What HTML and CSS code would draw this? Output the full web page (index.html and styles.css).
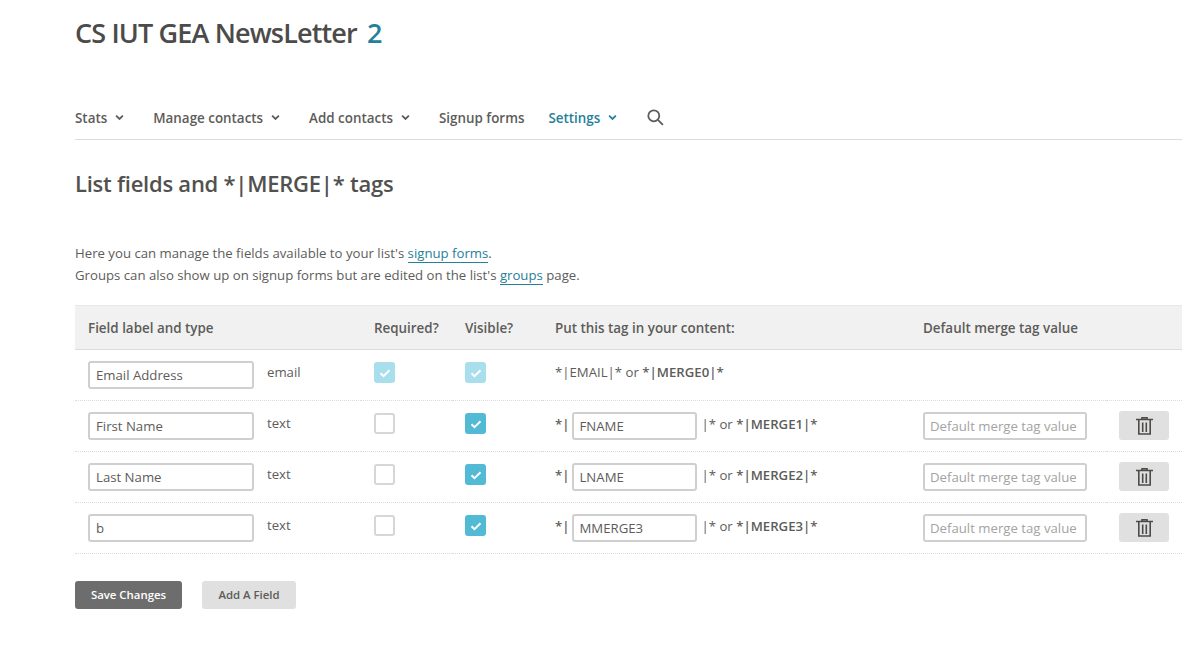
FILE: index.html
```html
<!DOCTYPE html>
<html>
    <head>
        <meta charset="utf-8">
        <meta name="viewport" content="width=device-width, initial-scale=1">
        <title>List fields and merge tags</title>
        <link rel="stylesheet" href="styles.css">
    </head>
    <body>
        <div class="page">
            <h1 class="list-name">CS IUT GEA NewsLetter <span class="list-count">2</span></h1>

            <nav class="nav">
                <a class="nav-item" href="#">Stats <svg class="caret" viewBox="0 0 8 6"><path d="M1 1.3l3 3 3-3"/></svg></a>
                <a class="nav-item" href="#">Manage contacts <svg class="caret" viewBox="0 0 8 6"><path d="M1 1.3l3 3 3-3"/></svg></a>
                <a class="nav-item" href="#">Add contacts <svg class="caret" viewBox="0 0 8 6"><path d="M1 1.3l3 3 3-3"/></svg></a>
                <a class="nav-item" href="#">Signup forms</a>
                <a class="nav-item nav-active" href="#">Settings <svg class="caret" viewBox="0 0 8 6"><path d="M1 1.3l3 3 3-3"/></svg></a>
                <a class="nav-search" href="#"><svg viewBox="0 0 17 17" width="17" height="17"><circle cx="6.8" cy="6.800" r="5.500"/><path d="M10.900 10.900l5 5"/></svg></a>
            </nav>

            <h2 class="title">List fields and *|MERGE|* tags</h2>

            <p class="intro">
                Here you can manage the fields available to your list's <a href="#">signup forms</a>.<br>
                Groups can also show up on signup forms but are edited on the list's <a href="#">groups</a> page.
            </p>

            <table class="fields">
                <thead>
                    <tr>
                        <th class="col-label">Field label and type</th>
                        <th class="col-check">Required?</th>
                        <th class="col-check2">Visible?</th>
                        <th class="col-tag">Put this tag in your content:</th>
                        <th class="col-default">Default merge tag value</th>
                        <th class="col-action"></th>
                    </tr>
                </thead>
                <tbody>
                    <tr>
                        <td><div class="label-cell"><input class="input input-label" type="text" value="Email Address"><span class="field-type">email</span></div></td>
                        <td><span class="check check-locked"><svg viewBox="0 0 12 10"><path d="M1.5 5.2l3 3 6-6"/></svg></span></td>
                        <td><span class="check check-locked"><svg viewBox="0 0 12 10"><path d="M1.5 5.2l3 3 6-6"/></svg></span></td>
                        <td><span class="tag-text">*|EMAIL|* or <b>*|MERGE0|*</b></span></td>
                        <td></td>
                        <td></td>
                    </tr>
                    <tr>
                        <td><div class="label-cell"><input class="input input-label" type="text" value="First Name"><span class="field-type">text</span></div></td>
                        <td><span class="check"></span></td>
                        <td><span class="check check-on"><svg viewBox="0 0 12 10"><path d="M1.5 5.2l3 3 6-6"/></svg></span></td>
                        <td><div class="tag-cell"><b>*|</b><input class="input input-tag" type="text" value="FNAME"><span class="tag-text">|* or <b>*|MERGE1|*</b></span></div></td>
                        <td><input class="input input-default" type="text" placeholder="Default merge tag value"></td>
                        <td><button class="trash"><svg viewBox="0 0 17 18" width="17" height="18"><path d="M0 2.5h17M6 2.500V.8h5v1.700"/><path d="M2.800 3v14h11.400V3M6.700 5.500v9.500M10.300 5.500v9.500"/></svg></button></td>
                    </tr>
                    <tr>
                        <td><div class="label-cell"><input class="input input-label" type="text" value="Last Name"><span class="field-type">text</span></div></td>
                        <td><span class="check"></span></td>
                        <td><span class="check check-on"><svg viewBox="0 0 12 10"><path d="M1.5 5.2l3 3 6-6"/></svg></span></td>
                        <td><div class="tag-cell"><b>*|</b><input class="input input-tag" type="text" value="LNAME"><span class="tag-text">|* or <b>*|MERGE2|*</b></span></div></td>
                        <td><input class="input input-default" type="text" placeholder="Default merge tag value"></td>
                        <td><button class="trash"><svg viewBox="0 0 17 18" width="17" height="18"><path d="M0 2.5h17M6 2.500V.8h5v1.700"/><path d="M2.800 3v14h11.400V3M6.700 5.500v9.500M10.300 5.500v9.500"/></svg></button></td>
                    </tr>
                    <tr>
                        <td><div class="label-cell"><input class="input input-label" type="text" value="b"><span class="field-type">text</span></div></td>
                        <td><span class="check"></span></td>
                        <td><span class="check check-on"><svg viewBox="0 0 12 10"><path d="M1.5 5.2l3 3 6-6"/></svg></span></td>
                        <td><div class="tag-cell"><b>*|</b><input class="input input-tag" type="text" value="MMERGE3"><span class="tag-text">|* or <b>*|MERGE3|*</b></span></div></td>
                        <td><input class="input input-default" type="text" placeholder="Default merge tag value"></td>
                        <td><button class="trash"><svg viewBox="0 0 17 18" width="17" height="18"><path d="M0 2.5h17M6 2.500V.8h5v1.700"/><path d="M2.800 3v14h11.400V3M6.700 5.500v9.500M10.300 5.500v9.500"/></svg></button></td>
                    </tr>
                </tbody>
            </table>

            <div class="actions">
                <button class="btn btn-dark">Save Changes</button>
                <button class="btn btn-light">Add A Field</button>
            </div>
        </div>
    </body>
</html>
```

FILE: styles.css
```css
*, ::after, ::before {
    box-sizing: border-box;
}
body {
    margin: 0;
    background: #fff;
    color: #5d5c5a;
    font-family: "Open Sans", sans-serif;
    font-size: 13.2px;
}
a {
    color: inherit;
    text-decoration: none;
}
.page {
    width: 1107px;
    margin-left: 75px;
    padding-top: 15px;
}
.list-name {
    margin: 0;
    font-size: 27px;
    line-height: 36px;
    font-weight: 600;
    letter-spacing: -0.85px;
    color: #4c4b49;
}
.list-count {
    margin-left: 4px;
    color: #25809a;
}
.nav {
    display: flex;
    align-items: center;
    height: 40px;
    margin-top: 49px;
    padding-bottom: 4px;
    border-bottom: 1px solid #dcdcdc;
}
.nav-item {
    display: flex;
    align-items: center;
    margin-right: 24px;
    font-weight: 600;
    font-size: 13.4px;
}
.nav-active {
    color: #26809a;
}
.caret {
    width: 9px;
    height: 7px;
    margin-left: 8px;
    margin-right: 5px;
    fill: none;
    stroke: currentColor;
    stroke-width: 1.6;
}
.nav-search {
    display: flex;
    margin-left: 1px;
}
.nav-search svg {
    fill: none;
    stroke: #5d5c5a;
    stroke-width: 1.8;
}
.title {
    margin: 28px 0 0;
    font-size: 22px;
    line-height: 30px;
    font-weight: 600;
    letter-spacing: -0.24px;
    color: #52514f;
}
.intro {
    margin: 44px 0 0;
    line-height: 22px;
}
.intro a {
    color: #26809a;
    border-bottom: 1px solid #26809a;
}
.fields {
    width: 1107px;
    margin-top: 19px;
    border-collapse: collapse;
    table-layout: fixed;
}
.fields th {
    height: 44px;
    padding: 0 0 0 13px;
    background: #f1f1f1;
    border-top: 1px solid #e8e8e8;
    border-bottom: 1px solid #dcdcdc;
    text-align: left;
    font-size: 13.4px;
    font-weight: 600;
    white-space: nowrap;
}
.col-label { width: 286px; }
.col-check { width: 91px; }
.col-check2 { width: 90px; }
.col-tag { width: 368px; }
.col-default { width: 196px; }
.col-action { width: 76px; }
.fields td {
    height: 51px;
    padding: 0 0 0 13px;
    border-bottom: 1px dotted #dcdcdc;
    vertical-align: top;
}
.label-cell {
    display: flex;
    padding-top: 11px;
}
.input {
    height: 28px;
    padding: 0 5px;
    border: 2px solid #cfcfcf;
    border-radius: 3px;
    background: #fff;
    color: #5d5c5a;
    font-family: "Open Sans", sans-serif;
    font-size: 13.2px;
    outline: 0;
}
.input::placeholder {
    color: #a3a3a3;
    opacity: 1;
}
.input-label {
    width: 166px;
    padding: 0 6px;
}
.field-type {
    margin-left: 13px;
    line-height: 22px;
}
.check {
    display: flex;
    align-items: center;
    justify-content: center;
    width: 21px;
    height: 21px;
    margin-top: 12px;
    border: 2px solid #d6d6d6;
    border-radius: 3px;
    background: #fff;
}
.check svg {
    width: 12px;
    height: 10px;
    fill: none;
    stroke: #fff;
    stroke-width: 2;
}
.check-on {
    border: 0;
    background: #52bad5;
}
.check-locked {
    border: 0;
    background: #a9deec;
}
.tag-cell {
    display: flex;
    align-items: flex-start;
    padding-top: 11px;
}
.tag-cell b {
    line-height: 24px;
}
.tag-text {
    display: block;
    line-height: 22px;
    margin-top: 11px;
    white-space: nowrap;
}
.tag-cell .tag-text {
    margin: 1px 0 0 4px;
}
.tag-cell .tag-text b {
    line-height: 22px;
}
.tag-text b, .tag-cell b {
    font-weight: 600;
}
.input-tag {
    width: 125px;
    margin-left: 3px;
}
.input-default {
    display: block;
    width: 164px;
    margin-top: 11px;
}
.trash {
    display: flex;
    align-items: center;
    justify-content: center;
    width: 50px;
    height: 29px;
    margin-top: 10px;
    padding: 0;
    border: 0;
    border-radius: 3px;
    background: #e0e0e0;
}
.trash svg {
    fill: none;
    stroke: #4c4b49;
    stroke-width: 1.6;
}
.actions {
    display: flex;
    gap: 20px;
    margin-top: 27px;
}
.btn {
    height: 28px;
    padding: 0 0 2px;
    border: 0;
    border-radius: 3px;
    font-family: "Open Sans", sans-serif;
    font-size: 11.4px;
    font-weight: 600;
}
.btn-dark {
    width: 107px;
    background: #6d6d6d;
    color: #fff;
}
.btn-light {
    width: 94px;
    background: #e0e0e0;
    color: #5d5c5a;
}
```
